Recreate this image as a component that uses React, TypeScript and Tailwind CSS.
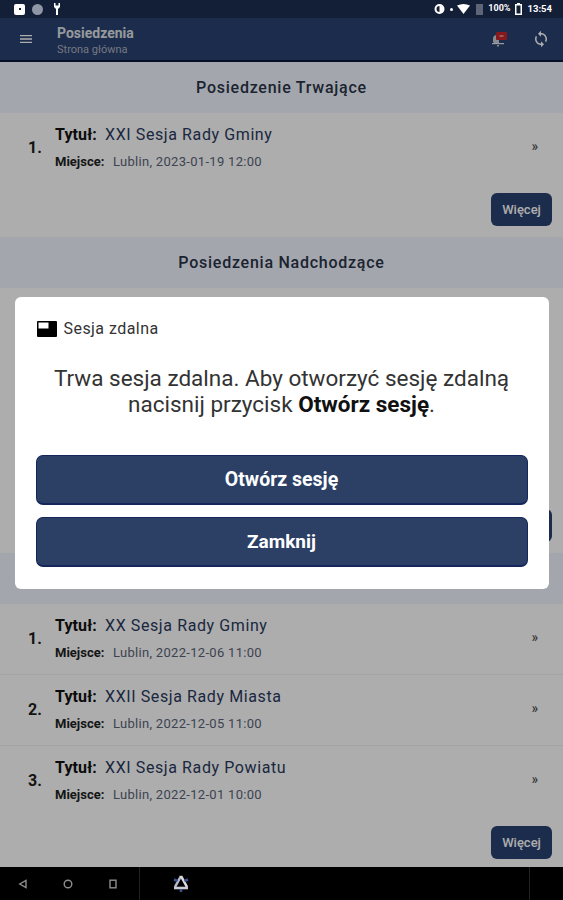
import { MdMenu, MdSync } from "react-icons/md";

const font = { fontFamily: "Roboto, 'Noto Sans', sans-serif" };

type Item = { n: number; title: string; place: string };

function Row({ item, last }: { item: Item; last: boolean }) {
  return (
    <div className={`flex h-[71px] items-center pl-[28px] pr-[25px] ${last ? "" : "border-b border-[#f2f2f2]"}`}>
      <span className="mb-[1px] w-[27px] text-[16px] font-bold text-[#1c1c1c]">{item.n}.</span>
      <div className="flex-1 pt-[1px]">
        <div className="flex h-[26px] items-center">
          <span className="w-[50px] text-[16px] font-bold tracking-[0.1px] text-[#111]">Tytuł:</span>
          <span className="text-[16px] tracking-[0.6px] text-[#2a3a5e]">{item.title}</span>
        </div>
        <div className="flex h-[28px] items-center">
          <span className="w-[58px] text-[13px] font-bold text-[#222]">Miejsce:</span>
          <span className="text-[13px] tracking-[0.3px] text-[#5a6479]">{item.place}</span>
        </div>
      </div>
      <span className="mb-[4px] text-[14px] text-[#444]">»</span>
    </div>
  );
}

function More() {
  return (
    <div className="flex justify-end pr-[11px]">
      <button className="h-[33px] w-[61px] rounded-[6px] bg-[#2a4270] text-[13px] font-medium text-white">Więcej</button>
    </div>
  );
}

function Band({ title }: { title: string }) {
  return (
    <div className="flex h-[51px] items-center justify-center bg-[#f2f5ff] text-[16px] font-medium tracking-[0.75px] text-[#2a3448]">
      {title}
    </div>
  );
}

function StatusBar() {
  return (
    <div className="flex h-[18px] shrink-0 items-center justify-between bg-[#131e37] pl-[14px] pr-[11px] text-white">
      <div className="flex items-center">
        <span className="flex h-[11px] w-[11px] items-center justify-center rounded-[2px] bg-white">
          <span className="h-[2px] w-[2px] bg-[#131e37]" />
        </span>
        <span className="ml-[7px] h-[11px] w-[11px] rounded-full bg-[#8f96a6]" />
        <svg className="ml-[10px]" width="8" height="12" viewBox="0 0 8 12" fill="white">
          <path d="M1 0v4l2 2v6h2V6l2-2V0H5.5v2.5h-3V0z" />
        </svg>
      </div>
      <div className="flex items-center gap-[4px]">
        <svg width="13" height="12" viewBox="0 0 13 12" fill="none">
          <circle cx="6.5" cy="6" r="4" stroke="white" strokeWidth="2" />
          <path d="M6.5 2.5v7a3.5 3.5 0 0 0 0-7z" fill="white" />
        </svg>
        <span className="h-[3px] w-[3px] rounded-full bg-white" />
        <svg width="13" height="10" viewBox="0 0 13 10" fill="white">
          <path d="M0 1.5Q6.5-1.5 13 1.5L6.5 10z" />
        </svg>
        <span className="ml-[2px] h-[11px] w-[7px] bg-[#5d6679]" />
        <span className="ml-[1px] text-[9px] font-bold">100%</span>
        <svg width="7" height="12" viewBox="0 0 7 12" fill="white">
          <path d="M2 0h3v1h2v11H0V1h2zM1.5 2.5v8h4v-8z" fillRule="evenodd" />
        </svg>
        <span className="ml-[2px] text-[9.5px] font-bold">13:54</span>
      </div>
    </div>
  );
}

function BellIcon() {
  return (
    <svg width="16" height="16" viewBox="0 0 16 16">
      <path d="M1 11V8a4 4 0 0 1 4-4h2v8H2z" fill="#c9ced8" />
      <rect x="0" y="12" width="12" height="1.2" fill="#e4e6ec" />
      <rect x="5" y="14" width="2" height="1.5" fill="#c9ced8" />
      <rect x="4" y="1" width="11" height="8" rx="1" fill="#c6252b" />
      <rect x="7.5" y="4.4" width="4" height="1.2" fill="#f2c4c4" />
    </svg>
  );
}

function AppBar() {
  return (
    <div className="flex h-[44px] shrink-0 items-center border-b-2 border-[#0c1638] bg-[#2a4270] text-white">
      <MdMenu className="ml-[18px] text-[16px]" />
      <div className="ml-[23px] flex-1 pt-[3px]">
        <div className="text-[14px] font-bold leading-[16px] text-[#dfe1e6]">Posiedzenia</div>
        <div className="mt-[3px] text-[11px] leading-[12px] text-[#aab1bf]">Strona główna</div>
      </div>
      <div className="mr-[24px]">
        <BellIcon />
      </div>
      <MdSync className="mr-[13px] text-[18px]" />
    </div>
  );
}

function NavBar() {
  return (
    <div className="flex h-[33px] shrink-0 items-center bg-black">
      <div className="flex h-full w-[140px] items-center border-r border-[#222] pl-[18px]">
        <svg width="10" height="10" viewBox="0 0 10 10" fill="none" stroke="#8d8d8d" strokeWidth="1.4">
          <path d="M8 1.5v7L1.8 5z" />
        </svg>
        <svg className="ml-[35px]" width="10" height="10" viewBox="0 0 10 10" fill="none" stroke="#8d8d8d" strokeWidth="1.4">
          <circle cx="5" cy="5" r="3.8" />
        </svg>
        <svg className="ml-[35px]" width="10" height="10" viewBox="0 0 10 10" fill="none" stroke="#8d8d8d" strokeWidth="1.4">
          <rect x="2" y="1.2" width="6" height="7.6" />
        </svg>
      </div>
      <svg className="ml-[31px]" width="20" height="20" viewBox="0 0 20 20" fill="none" strokeWidth="2.6">
        <path d="M10 2 4 13" stroke="#b9bccb" />
        <path d="M10 2 16 13" stroke="#dcdde2" />
        <path d="M3 14H17" stroke="#c9cad2" />
        <path d="M3 5.5 6.5 7" stroke="#3d4f8c" />
        <path d="M17 5.5 13.5 7" stroke="#3d4f8c" />
        <path d="M10 18v-3" stroke="#3d4f8c" />
      </svg>
      <div className="ml-auto mr-[33px] h-full border-r border-[#222]" />
    </div>
  );
}

function Dialog() {
  return (
    <div className="w-[534px] rounded-[6px] bg-white px-[21px] pb-[22px] pt-[23px]">
      <div className="flex h-[18px] items-center gap-[7px] pl-[1px]">
        <svg width="20" height="16" viewBox="0 0 20 16">
          <rect width="20" height="16" rx="1" fill="#000" />
          <rect x="1.5" y="1.5" width="10" height="6" fill="#fff" />
        </svg>
        <span className="text-[16px] tracking-[0.45px] text-[#333]">Sesja zdalna</span>
      </div>
      <p className="mt-[27px] text-center text-[22.5px] leading-[26px] text-[#333]">
        Trwa sesja zdalna. Aby otworzyć sesję zdalną nacisnij przycisk <b className="font-bold text-[#111]">Otwórz sesję</b>.
      </p>
      <div className="mt-[38px] flex flex-col gap-[12px]">
        <button className="h-[50px] rounded-[7px] border border-b-2 border-[#14265a] bg-[#2c4066] pt-[2px] text-[19.5px] font-bold text-white">Otwórz sesję</button>
        <button className="h-[50px] rounded-[7px] border border-b-2 border-[#14265a] bg-[#2c4066] pt-[2px] text-[19px] font-bold text-white">Zamknij</button>
      </div>
    </div>
  );
}

const past: Item[] = [
  { n: 1, title: "XX Sesja Rady Gminy", place: "Lublin, 2022-12-06 11:00" },
  { n: 2, title: "XXII Sesja Rady Miasta", place: "Lublin, 2022-12-05 11:00" },
  { n: 3, title: "XXI Sesja Rady Powiatu", place: "Lublin, 2022-12-01 10:00" },
];

export default function App() {
  return (
    <div className="flex h-[900px] w-[563px] flex-col overflow-hidden bg-black" style={font}>
      <StatusBar />
      <div className="relative flex min-h-0 flex-1 flex-col bg-white">
        <AppBar />
        <Band title="Posiedzenie Trwające" />
        <div className="h-[124px]">
          <Row item={{ n: 1, title: "XXI Sesja Rady Gminy", place: "Lublin, 2023-01-19 12:00" }} last />
          <div className="mt-[9px]">
            <More />
          </div>
        </div>
        <Band title="Posiedzenia Nadchodzące" />
        <div className="flex h-[265px] flex-col justify-end pb-[11px]">
          <More />
        </div>
        <Band title="Posiedzenia Zakończone" />
        <div>
          {past.map((p, i) => (
            <Row key={p.n} item={p} last={i === past.length - 1} />
          ))}
          <div className="mt-[9px]">
            <More />
          </div>
        </div>
        <div className="absolute inset-0 flex items-center justify-center bg-black/32">
          <Dialog />
        </div>
      </div>
      <NavBar />
    </div>
  );
}
